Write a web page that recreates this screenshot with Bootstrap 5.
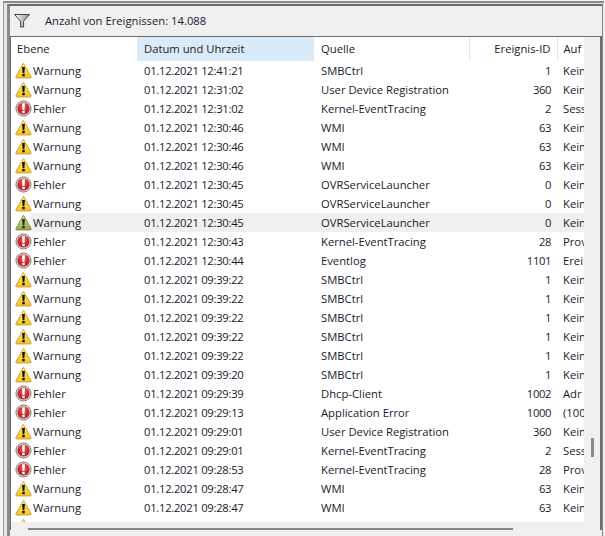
<!DOCTYPE html>
<html lang="de">
<head>
<meta charset="utf-8">
<title>Ereignisse</title>
<link href="https://cdn.jsdelivr.net/npm/bootstrap@5.3.0/dist/css/bootstrap.min.css" rel="stylesheet">
<style>
html,body{margin:0;height:536px;overflow:hidden;background:#f4f4f4}
body{font-family:"Open Sans","Noto Sans",sans-serif;font-size:11.25px;color:#1a1a2a;padding:1px 1px 0 3px}
.frame-out{height:535px;border-top:2px solid #8c8c8c;border-left:1px solid #9a9a9a;padding:1px 0 0 3px;background:#e6e6e6}
.frame-in{height:100%;border-top:2px solid #6b6b6b;border-left:3px solid #8a8a8a;border-right:1px solid #8a8a8a;background:#f0f0f0;margin-right:1px}
.filter-bar{height:30px;padding-left:4px;gap:15px}
.filter-bar svg{width:16px;height:14px;flex:none}
.list-box{height:494px;border:1px solid #6d6d6d;border-bottom:0;border-right-width:2px}
.list-main{width:573px;height:485px;background:#fff;overflow:hidden}
.ev-table{table-layout:fixed;width:573px;margin:0;border-collapse:collapse;--bs-table-bg:transparent;font-size:11.25px;color:#1a1a2a}
.ev-table th,.ev-table td{padding:0;border:0;white-space:nowrap;overflow:hidden;font-weight:400;background:transparent;box-shadow:none;color:inherit}
.ev-table th{height:24px;vertical-align:middle;color:#222}
.ev-table td{height:19px;line-height:19px;vertical-align:middle}
.c-a{padding-left:6px!important}
td.c-a{padding-left:4px!important;overflow:visible}
.c-b{padding-left:7px!important}
td.c-b{letter-spacing:-.28px}
th.c-b{background:#d9ebf9!important}
.c-c{padding-left:7px!important}
.c-d{padding-right:6px!important;text-align:right}
td.c-d{letter-spacing:-.4px}
th.c-d{border-right:1px solid #e5e5e5!important}
th.c-c{border-right:1px solid #e5e5e5!important}
.c-e{padding-left:6px!important}
.ev-ico{width:17px;height:17px;margin-top:1px;vertical-align:top}
.ev-name{display:inline-block;padding-left:1px}
tr.row-sel td{background:#f0f0f0}
tr.row-sel td.c-a{background:linear-gradient(90deg,transparent 20px,#f0f0f0 20px)}
.vbar{width:16px}
.vthumb{width:3px;height:19px;background:#8a8a8a;margin:401px 0 0 7px}
.hthumb{width:485px;height:3px;background:#858585;margin:6px 0 0 17px}
</style>
</head>
<body>
<svg width="0" height="0" class="d-block" aria-hidden="true">
<defs>
<linearGradient id="gy" x1="0" y1="0" x2="0" y2="1"><stop offset="0" stop-color="#ffec80"/><stop offset=".45" stop-color="#fddb45"/><stop offset="1" stop-color="#f5c225"/></linearGradient>
<linearGradient id="gg" x1="0" y1="0" x2="0" y2="1"><stop offset="0" stop-color="#dfe3a0"/><stop offset="1" stop-color="#8ea648"/></linearGradient>
<radialGradient id="gr" cx=".5" cy=".35" r=".65"><stop offset="0" stop-color="#e8645a"/><stop offset=".65" stop-color="#c9262c"/><stop offset="1" stop-color="#a01a22"/></radialGradient>
<linearGradient id="gf" x1="0" y1="0" x2="1" y2="0"><stop offset="0" stop-color="#fff"/><stop offset="1" stop-color="#8f8f8f"/></linearGradient>
<symbol id="w" viewBox="0 0 18 18"><path d="M9 1.400 17 15.400a1 1 0 0 1-.9 1.500H1.900a1 1 0 0 1-.9-1.500Z" fill="url(#gy)" stroke="#caa238"/><path d="M7.500 5.300h3l-.6 6.500H8.100Z" fill="#111"/><rect x="7.700" y="12.700" width="2.600" height="2.400" fill="#111"/></symbol>
<symbol id="g" viewBox="0 0 18 18"><path d="M9 1.400 17 15.400a1 1 0 0 1-.9 1.500H1.900a1 1 0 0 1-.9-1.500Z" fill="url(#gg)" stroke="#7c8a45"/><path d="M7.500 5.300h3l-.6 6.500H8.100Z" fill="#1c2a10"/><rect x="7.700" y="12.700" width="2.600" height="2.400" fill="#1c2a10"/></symbol>
<symbol id="e" viewBox="0 0 18 18"><circle cx="9" cy="9" r="8" fill="#d6d2d2" stroke="#8c7070"/><circle cx="9" cy="9" r="6.400" fill="url(#gr)"/><path d="M7.400 3.500h3.200l-.6 7H8Z" fill="#fff"/><rect x="7.700" y="11.500" width="2.600" height="2.500" fill="#fff"/></symbol>
</defs>
</svg>
<div class="frame-out">
<div class="frame-in d-flex flex-column">
<div class="filter-bar d-flex align-items-center">
<svg viewBox="0 0 16 14"><path d="M.5.500h15L9.600 7.200v5.800H6.600V7.200Z" fill="url(#gf)" stroke="#444"/></svg>
<span>Anzahl von Ereignissen: 14.088</span>
</div>
<div class="list-box d-flex flex-column">
<div class="d-flex">
<div class="list-main">
<table class="table ev-table">
<colgroup><col style="width:126px"><col style="width:177px"><col style="width:155px"><col style="width:88px"><col style="width:27px"></colgroup>
<thead><tr><th class="c-a">Ebene</th><th class="c-b">Datum und Uhrzeit</th><th class="c-c">Quelle</th><th class="c-d">Ereignis-ID</th><th class="c-e">Auf</th></tr></thead>
<tbody>
<tr><td class="c-a"><svg class="ev-ico"><use href="#w"/></svg><span class="ev-name">Warnung</span></td><td class="c-b">01.12.2021 12:41:21</td><td class="c-c">SMBCtrl</td><td class="c-d">1</td><td class="c-e">Kein</td></tr>
<tr><td class="c-a"><svg class="ev-ico"><use href="#w"/></svg><span class="ev-name">Warnung</span></td><td class="c-b">01.12.2021 12:31:02</td><td class="c-c">User Device Registration</td><td class="c-d">360</td><td class="c-e">Kein</td></tr>
<tr><td class="c-a"><svg class="ev-ico"><use href="#e"/></svg><span class="ev-name">Fehler</span></td><td class="c-b">01.12.2021 12:31:02</td><td class="c-c">Kernel-EventTracing</td><td class="c-d">2</td><td class="c-e">Sess</td></tr>
<tr><td class="c-a"><svg class="ev-ico"><use href="#w"/></svg><span class="ev-name">Warnung</span></td><td class="c-b">01.12.2021 12:30:46</td><td class="c-c">WMI</td><td class="c-d">63</td><td class="c-e">Kein</td></tr>
<tr><td class="c-a"><svg class="ev-ico"><use href="#w"/></svg><span class="ev-name">Warnung</span></td><td class="c-b">01.12.2021 12:30:46</td><td class="c-c">WMI</td><td class="c-d">63</td><td class="c-e">Kein</td></tr>
<tr><td class="c-a"><svg class="ev-ico"><use href="#w"/></svg><span class="ev-name">Warnung</span></td><td class="c-b">01.12.2021 12:30:46</td><td class="c-c">WMI</td><td class="c-d">63</td><td class="c-e">Kein</td></tr>
<tr><td class="c-a"><svg class="ev-ico"><use href="#e"/></svg><span class="ev-name">Fehler</span></td><td class="c-b">01.12.2021 12:30:45</td><td class="c-c">OVRServiceLauncher</td><td class="c-d">0</td><td class="c-e">Kein</td></tr>
<tr><td class="c-a"><svg class="ev-ico"><use href="#w"/></svg><span class="ev-name">Warnung</span></td><td class="c-b">01.12.2021 12:30:45</td><td class="c-c">OVRServiceLauncher</td><td class="c-d">0</td><td class="c-e">Kein</td></tr>
<tr class="row-sel"><td class="c-a"><svg class="ev-ico"><use href="#g"/></svg><span class="ev-name">Warnung</span></td><td class="c-b">01.12.2021 12:30:45</td><td class="c-c">OVRServiceLauncher</td><td class="c-d">0</td><td class="c-e">Kein</td></tr>
<tr><td class="c-a"><svg class="ev-ico"><use href="#e"/></svg><span class="ev-name">Fehler</span></td><td class="c-b">01.12.2021 12:30:43</td><td class="c-c">Kernel-EventTracing</td><td class="c-d">28</td><td class="c-e">Prov</td></tr>
<tr><td class="c-a"><svg class="ev-ico"><use href="#e"/></svg><span class="ev-name">Fehler</span></td><td class="c-b">01.12.2021 12:30:44</td><td class="c-c">Eventlog</td><td class="c-d">1101</td><td class="c-e">Erei</td></tr>
<tr><td class="c-a"><svg class="ev-ico"><use href="#w"/></svg><span class="ev-name">Warnung</span></td><td class="c-b">01.12.2021 09:39:22</td><td class="c-c">SMBCtrl</td><td class="c-d">1</td><td class="c-e">Kein</td></tr>
<tr><td class="c-a"><svg class="ev-ico"><use href="#w"/></svg><span class="ev-name">Warnung</span></td><td class="c-b">01.12.2021 09:39:22</td><td class="c-c">SMBCtrl</td><td class="c-d">1</td><td class="c-e">Kein</td></tr>
<tr><td class="c-a"><svg class="ev-ico"><use href="#w"/></svg><span class="ev-name">Warnung</span></td><td class="c-b">01.12.2021 09:39:22</td><td class="c-c">SMBCtrl</td><td class="c-d">1</td><td class="c-e">Kein</td></tr>
<tr><td class="c-a"><svg class="ev-ico"><use href="#w"/></svg><span class="ev-name">Warnung</span></td><td class="c-b">01.12.2021 09:39:22</td><td class="c-c">SMBCtrl</td><td class="c-d">1</td><td class="c-e">Kein</td></tr>
<tr><td class="c-a"><svg class="ev-ico"><use href="#w"/></svg><span class="ev-name">Warnung</span></td><td class="c-b">01.12.2021 09:39:22</td><td class="c-c">SMBCtrl</td><td class="c-d">1</td><td class="c-e">Kein</td></tr>
<tr><td class="c-a"><svg class="ev-ico"><use href="#w"/></svg><span class="ev-name">Warnung</span></td><td class="c-b">01.12.2021 09:39:20</td><td class="c-c">SMBCtrl</td><td class="c-d">1</td><td class="c-e">Kein</td></tr>
<tr><td class="c-a"><svg class="ev-ico"><use href="#e"/></svg><span class="ev-name">Fehler</span></td><td class="c-b">01.12.2021 09:29:39</td><td class="c-c">Dhcp-Client</td><td class="c-d">1002</td><td class="c-e">Adr</td></tr>
<tr><td class="c-a"><svg class="ev-ico"><use href="#e"/></svg><span class="ev-name">Fehler</span></td><td class="c-b">01.12.2021 09:29:13</td><td class="c-c">Application Error</td><td class="c-d">1000</td><td class="c-e">(100</td></tr>
<tr><td class="c-a"><svg class="ev-ico"><use href="#w"/></svg><span class="ev-name">Warnung</span></td><td class="c-b">01.12.2021 09:29:01</td><td class="c-c">User Device Registration</td><td class="c-d">360</td><td class="c-e">Kein</td></tr>
<tr><td class="c-a"><svg class="ev-ico"><use href="#e"/></svg><span class="ev-name">Fehler</span></td><td class="c-b">01.12.2021 09:29:01</td><td class="c-c">Kernel-EventTracing</td><td class="c-d">2</td><td class="c-e">Sess</td></tr>
<tr><td class="c-a"><svg class="ev-ico"><use href="#e"/></svg><span class="ev-name">Fehler</span></td><td class="c-b">01.12.2021 09:28:53</td><td class="c-c">Kernel-EventTracing</td><td class="c-d">28</td><td class="c-e">Prov</td></tr>
<tr><td class="c-a"><svg class="ev-ico"><use href="#w"/></svg><span class="ev-name">Warnung</span></td><td class="c-b">01.12.2021 09:28:47</td><td class="c-c">WMI</td><td class="c-d">63</td><td class="c-e">Kein</td></tr>
<tr><td class="c-a"><svg class="ev-ico"><use href="#w"/></svg><span class="ev-name">Warnung</span></td><td class="c-b">01.12.2021 09:28:47</td><td class="c-c">WMI</td><td class="c-d">63</td><td class="c-e">Kein</td></tr>
<tr><td class="c-a"><svg class="ev-ico"><use href="#w"/></svg></td><td class="c-b"></td><td class="c-c"></td><td class="c-d"></td><td class="c-e"></td></tr>
</tbody>
</table>
</div>
<div class="vbar"><div class="vthumb"></div></div>
</div>
<div class="hthumb"></div>
</div>
</div>
</div>
</body>
</html>
